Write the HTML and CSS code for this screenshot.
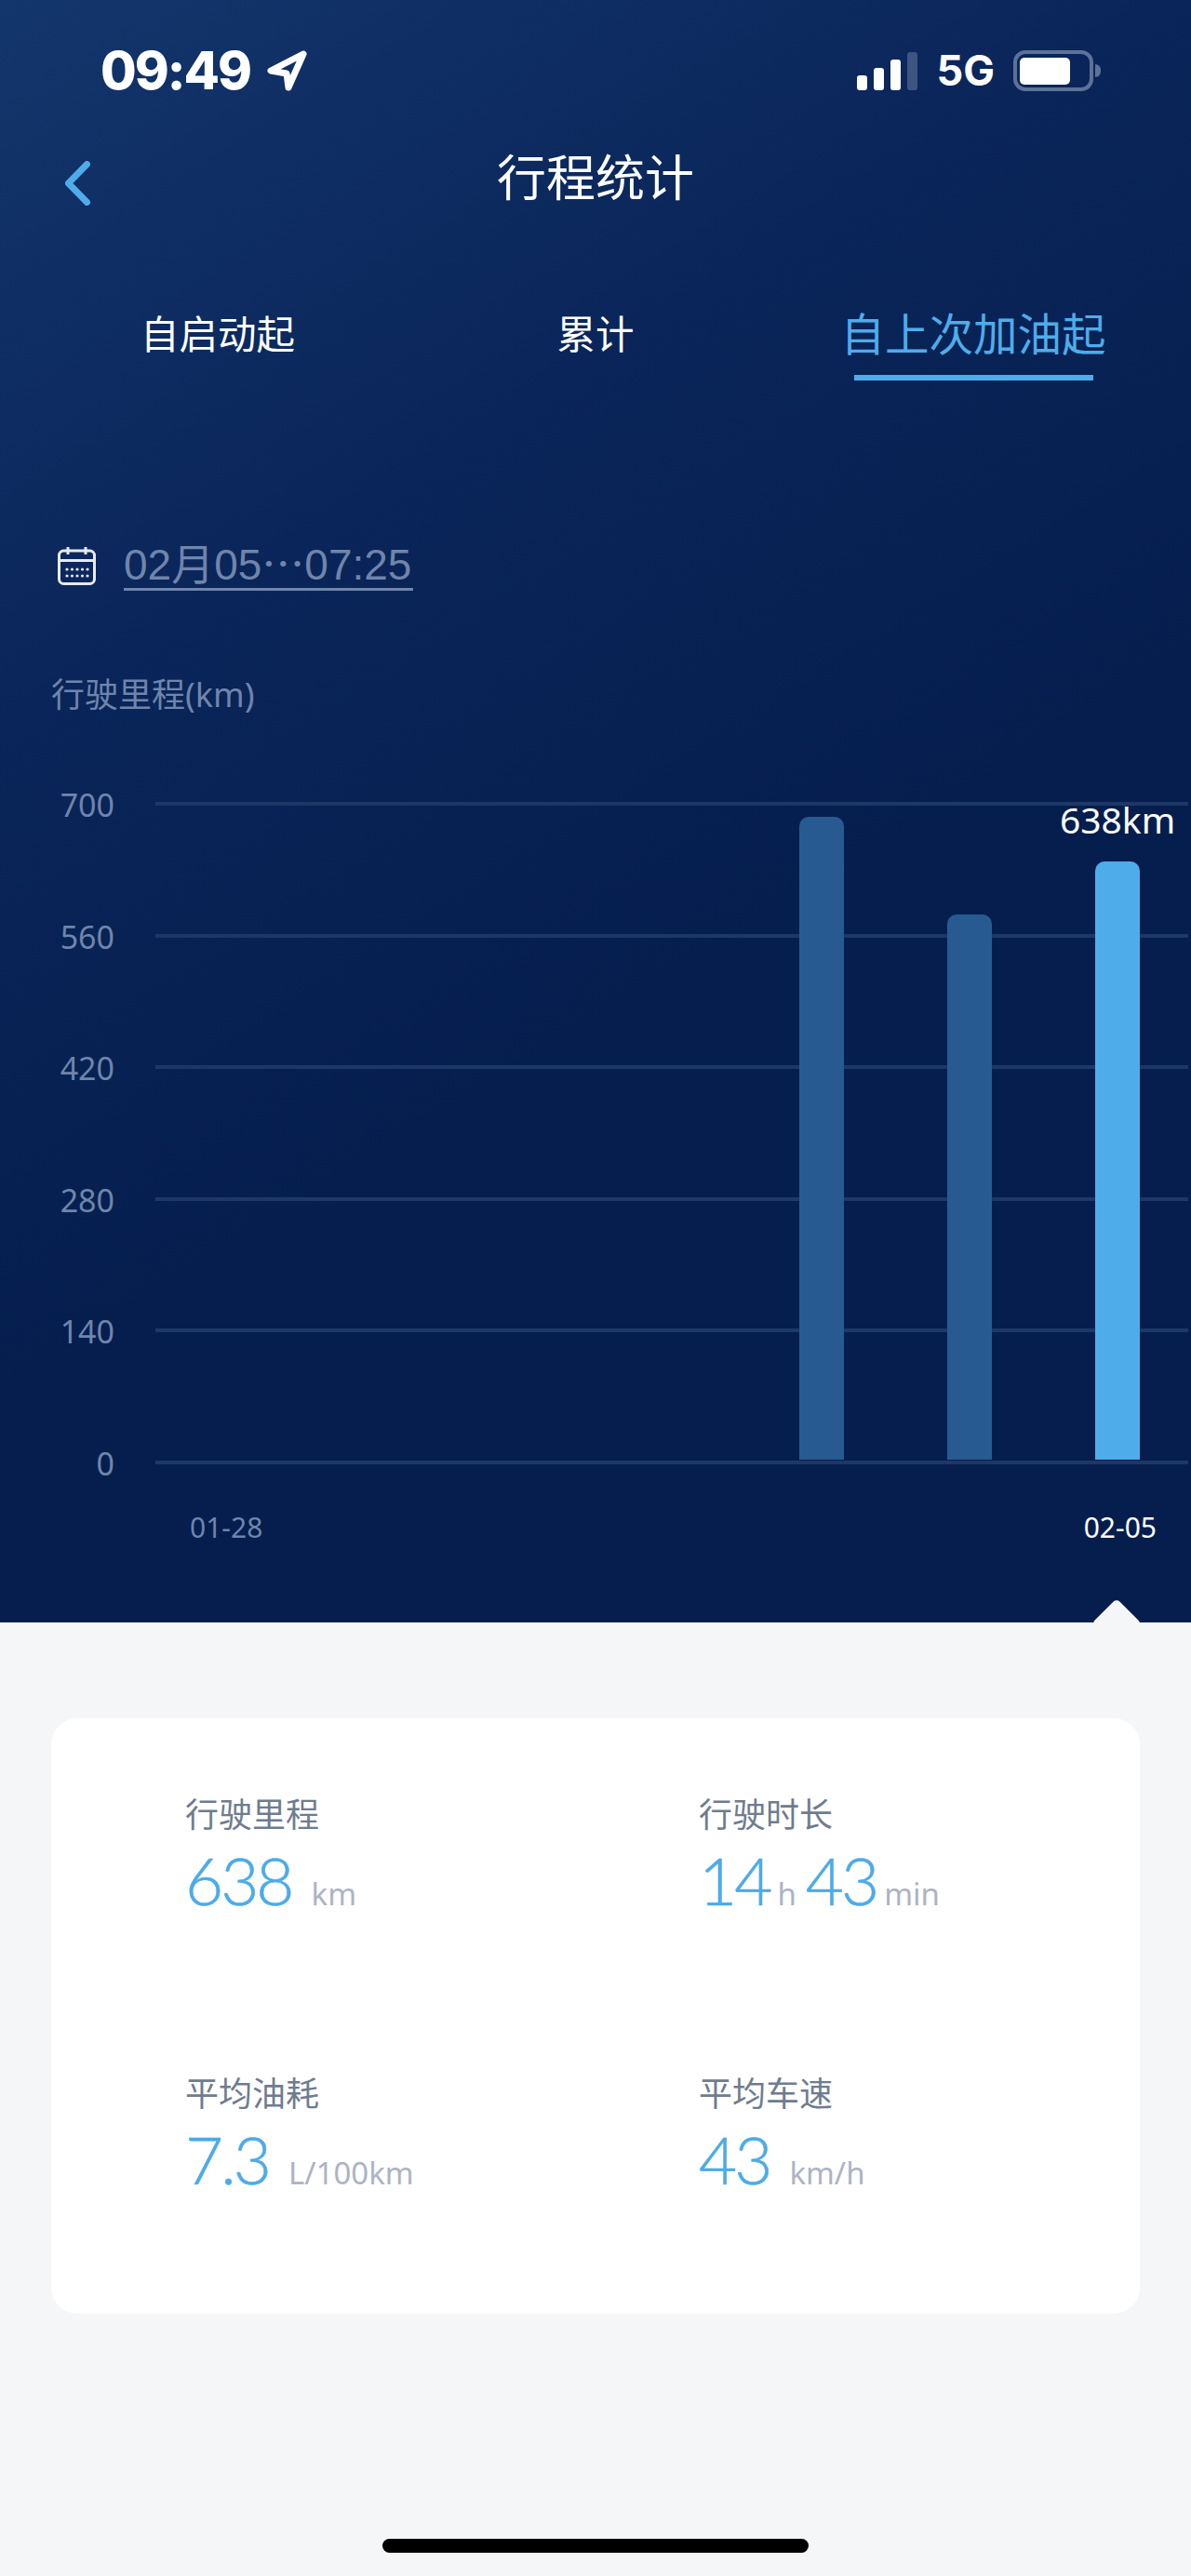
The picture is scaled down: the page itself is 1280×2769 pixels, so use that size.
FILE: index.html
```html
<!DOCTYPE html>
<html lang="zh-CN">
<head>
    <meta charset="UTF-8">
    <meta name="viewport" content="width=device-width, initial-scale=1.0">
    <title>行程统计</title>
    <link rel="stylesheet" href="styles.css">
</head>
<body>
    <div class="screen">
        <section class="hero">
            <div class="status-bar">
                <div class="status-left">
                    <span class="time">09:49</span>
                    <svg class="location-icon" width="44" height="44" viewBox="0 0 44 44">
                        <path d="M40 4 L5 22 L22 25 L24 40 Z" fill="none" stroke="#fff" stroke-width="7" stroke-linejoin="round"/>
                    </svg>
                </div>
                <div class="status-right">
                    <div class="signal">
                        <span class="signal-bar s1"></span>
                        <span class="signal-bar s2"></span>
                        <span class="signal-bar s3"></span>
                        <span class="signal-bar s4"></span>
                    </div>
                    <span class="network">5G</span>
                    <div class="battery">
                        <div class="battery-body"><div class="battery-fill"></div></div>
                        <div class="battery-nub"></div>
                    </div>
                </div>
            </div>

            <header class="nav">
                <svg class="back-icon" width="27" height="48" viewBox="0 0 27 48">
                    <path d="M23.5 3.5 L3.5 24 L23.5 44.5" fill="none" stroke="#4facea" stroke-width="7" stroke-linecap="round" stroke-linejoin="round"/>
                </svg>
                <h1 class="nav-title">行程统计</h1>
            </header>

            <nav class="tabs">
                <div class="tab">自启动起</div>
                <div class="tab">累计</div>
                <div class="tab active">自上次加油起</div>
            </nav>

            <div class="date-row">
                <svg class="calendar-icon" width="41" height="42" viewBox="0 0 41 42">
                    <rect x="1.5" y="5" width="38" height="35.5" rx="5" fill="none" stroke="#e6ebf3" stroke-width="3"/>
                    <path d="M2 15.5 H39 M11 1 V9 M30 1 V9" fill="none" stroke="#e6ebf3" stroke-width="3"/>
                    <g fill="#e6ebf3">
                        <circle cx="10" cy="25" r="1.6"/><circle cx="15.5" cy="25" r="1.6"/><circle cx="21" cy="25" r="1.6"/><circle cx="26.5" cy="25" r="1.6"/><circle cx="32" cy="25" r="1.6"/>
                        <circle cx="10" cy="32" r="1.6"/><circle cx="15.5" cy="32" r="1.6"/><circle cx="21" cy="32" r="1.6"/><circle cx="26.5" cy="32" r="1.6"/><circle cx="32" cy="32" r="1.6"/>
                    </g>
                </svg>
                <span class="date-text">02月05⋯07:25</span>
            </div>

            <div class="axis-title">行驶里程(km)</div>

            <div class="chart">
                <div class="y-row"><span class="y-label">700</span><span class="y-line"></span></div>
                <div class="y-row"><span class="y-label">560</span><span class="y-line"></span></div>
                <div class="y-row"><span class="y-label">420</span><span class="y-line"></span></div>
                <div class="y-row"><span class="y-label">280</span><span class="y-line"></span></div>
                <div class="y-row"><span class="y-label">140</span><span class="y-line"></span></div>
                <div class="y-row"><span class="y-label">0</span><span class="y-line"></span></div>
                <div class="bars">
                    <div class="bar" style="height: 691px;"></div>
                    <div class="bar" style="height: 586px;"></div>
                    <div class="bar current" style="height: 643px;">
                        <span class="bar-value">638km</span>
                    </div>
                </div>
            </div>

            <div class="x-axis">
                <span class="x-label">01-28</span>
                <span class="x-label current">02-05</span>
            </div>

            <div class="notch"></div>
        </section>

        <section class="panel">
            <div class="card">
                <div class="metric">
                    <div class="metric-label">行驶里程</div>
                    <div class="metric-value"><span class="num">638</span><span class="unit wide">km</span></div>
                </div>
                <div class="metric">
                    <div class="metric-label">行驶时长</div>
                    <div class="metric-value"><span class="num">14</span><span class="unit">h</span><span class="num">43</span><span class="unit">min</span></div>
                </div>
                <div class="metric">
                    <div class="metric-label">平均油耗</div>
                    <div class="metric-value"><span class="num">7.3</span><span class="unit wide">L/100km</span></div>
                </div>
                <div class="metric">
                    <div class="metric-label">平均车速</div>
                    <div class="metric-value"><span class="num">43</span><span class="unit wide">km/h</span></div>
                </div>
            </div>
            <div class="home-indicator"></div>
        </section>
    </div>
</body>
</html>
```

FILE: styles.css
```css
:root {
    --accent: #4facea;
    --muted-blue: #6f85ab;
    --grid-line: #1d3866;
    --panel-bg: #f5f6f8;
}

* {
    box-sizing: border-box;
    margin: 0;
    padding: 0;
}

body {
    font-family: "Noto Sans", "Noto Sans CJK SC", sans-serif;
    background-color: var(--panel-bg);
}

.screen {
    width: 1280px;
    height: 2769px;
    display: flex;
    flex-direction: column;
    overflow: hidden;
}

.hero {
    position: relative;
    height: 1744px;
    flex: none;
    background: linear-gradient(148deg, #13366c 0, #0a2559 31%, #051e4e 60%, #051e4e 100%);
    color: white;
}

.status-bar {
    height: 140px;
    display: flex;
    justify-content: space-between;
    align-items: center;
    padding: 12px 97px 0 108px;
}

.status-left {
    display: flex;
    align-items: center;
    gap: 17px;
}

.time {
    font-family: Inter, sans-serif;
    font-weight: 800;
    font-size: 56px;
    letter-spacing: -2px;
    line-height: 64px;
}

.status-right {
    display: flex;
    align-items: center;
}

.signal {
    display: flex;
    align-items: flex-end;
    gap: 7px;
    height: 41px;
}

.signal-bar {
    width: 11px;
    background-color: white;
    border-radius: 3px;
}

.s1 { height: 16px; }
.s2 { height: 24px; }
.s3 { height: 33px; }
.s4 { height: 41px; background-color: #3d5580; }

.network {
    font-family: Inter, sans-serif;
    font-weight: 700;
    font-size: 45px;
    line-height: 52px;
    margin-left: 20px;
    margin-right: 20px;
}

.battery {
    display: flex;
    align-items: center;
    gap: 2px;
}

.battery-body {
    width: 86px;
    height: 44px;
    border: 4px solid #5d7298;
    border-radius: 13px;
    padding: 4px 0 3px 3px;
}

.battery-fill {
    width: 54px;
    height: 100%;
    background-color: white;
    border-radius: 5px;
}

.battery-nub {
    width: 6px;
    height: 14px;
    background-color: #5d7298;
    border-radius: 0 7px 7px 0;
}

.nav {
    position: relative;
    height: 102px;
    display: flex;
    align-items: center;
    justify-content: center;
}

.back-icon {
    position: absolute;
    left: 70px;
    top: 33px;
}

.nav-title {
    font-size: 53px;
    font-weight: 400;
    line-height: 70px;
}

.tabs {
    display: grid;
    grid-template-columns: repeat(3, 1fr);
    margin: 77px 31px 0;
    height: 90px;
}

.tab {
    position: relative;
    text-align: center;
    font-size: 41.5px;
    line-height: 80px;
}

.tab.active {
    color: var(--accent);
    font-size: 47.5px;
}

.tab.active::after {
    content: "";
    position: absolute;
    left: 75px;
    right: 74px;
    bottom: 0;
    height: 6px;
    background-color: var(--accent);
}

.date-row {
    display: flex;
    align-items: center;
    gap: 30px;
    margin: 171px 0 0 62px;
    height: 56px;
}

.date-text {
    font-family: "Liberation Sans", "Noto Sans CJK SC", sans-serif;
    font-size: 46px;
    line-height: 50px;
    color: var(--muted-blue);
    border-bottom: 3px solid var(--muted-blue);
    padding-right: 2px;
}

.axis-title {
    margin: 87px 0 0 55px;
    font-size: 36px;
    line-height: 48px;
    color: var(--muted-blue);
}

.chart {
    position: relative;
    display: flex;
    flex-direction: column;
    gap: 137.6px;
    margin-top: 91px;
    padding-right: 3px;
}

.y-row {
    display: flex;
    align-items: center;
    height: 4px;
}

.y-label {
    width: 123px;
    padding-top: 2px;
    text-align: right;
    font-size: 34px;
    line-height: 4px;
    color: var(--muted-blue);
}

.y-line {
    flex: 1;
    height: 4px;
    margin-left: 44px;
    background-color: var(--grid-line);
}

.bars {
    position: absolute;
    left: 859px;
    bottom: 5px;
    display: flex;
    align-items: flex-end;
    gap: 111px;
}

.bar {
    position: relative;
    width: 48px;
    background-color: #285a92;
    border-radius: 10px 10px 0 0;
}

.bar.current {
    background-color: var(--accent);
}

.bar-value {
    position: absolute;
    left: 50%;
    bottom: calc(100% + 23px);
    transform: translateX(-50%);
    font-size: 39px;
    line-height: 44px;
    color: white;
}

.x-axis {
    display: flex;
    justify-content: space-between;
    margin-top: 48px;
    padding: 0 37px 0 204px;
}

.x-label {
    font-size: 30px;
    line-height: 40px;
    color: var(--muted-blue);
}

.x-label.current {
    color: white;
}

.notch {
    position: absolute;
    left: 1181px;
    bottom: -20px;
    width: 38px;
    height: 38px;
    background-color: var(--panel-bg);
    border-radius: 5px;
    transform: rotate(45deg);
}

.panel {
    position: relative;
    flex: 1;
    padding: 103px 55px 0;
    background-color: var(--panel-bg);
}

.card {
    display: grid;
    grid-template-columns: 552px 1fr;
    grid-auto-rows: 300px;
    height: 640px;
    padding: 79px 0 0 144px;
    background-color: white;
    border-radius: 28px;
}

.metric-label {
    font-size: 36px;
    line-height: 50px;
    color: #6f7c8f;
}

.metric-value {
    display: flex;
    align-items: baseline;
    margin-top: 3px;
    line-height: 84px;
}

.num {
    font-family: Lato, sans-serif;
    font-weight: 300;
    font-size: 71px;
    letter-spacing: -3px;
    -webkit-text-stroke: 0.6px #4dabe8;
    color: #4dabe8;
}

.unit {
    font-size: 33px;
    color: #adb3c4;
    margin-left: 8px;
    margin-right: 10px;
}

.unit.wide {
    margin-left: 21px;
}

.home-indicator {
    width: 458px;
    height: 15px;
    margin: 242px auto 0;
    background-color: black;
    border-radius: 8px;
}
```
